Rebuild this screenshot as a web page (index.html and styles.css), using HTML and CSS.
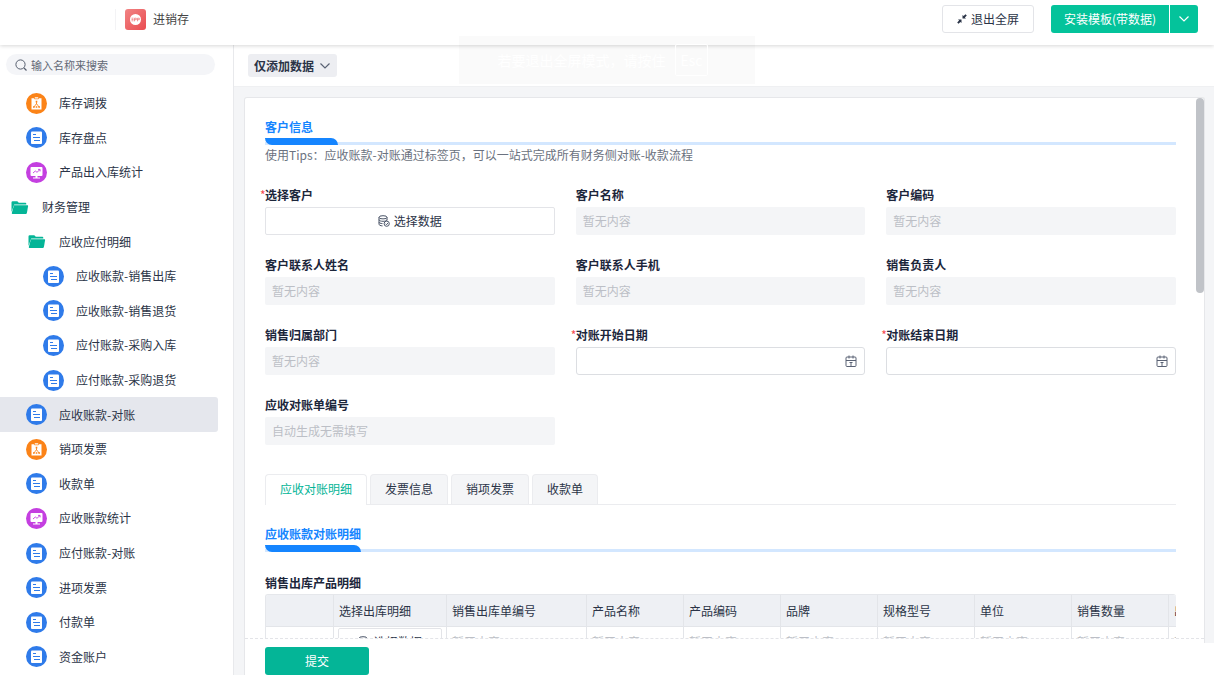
FILE: index.html
```
<!DOCTYPE html>
<html lang="zh-CN">
	<head>
		<meta charset="UTF-8">
		<title>进销存</title>
		<link rel="stylesheet" href="styles.css">
	</head>
	<body>

		<!--公用图标-->
		<svg class="sprite" aria-hidden="true">
			<symbol id="i-form" viewBox="0 0 21 21">
				<circle cx="10.5" cy="10.5" r="10.5" fill="#2f7bea"/>
				<rect x="5" y="4.500" width="11" height="12.500" rx="1" fill="#fff"/>
				<path d="M7 7.500h3M7 10.500h7M8 13.500h6" stroke="#2f7bea"/>
			</symbol>
			<symbol id="i-flow" viewBox="0 0 21 21">
				<circle cx="10.5" cy="10.5" r="10.5" fill="#fb8318"/>
				<path d="M5.500 5.200h2.500l.6 1h3.800l.6-1h2.500v11.300h-10z" fill="#fff"/>
				<path d="M8.800 4.300h3.400v1.200h-3.400z" fill="#fff"/>
				<path d="M10.500 8.300v3M8 14l2.500-3.500L13 14" stroke="#fb8318" stroke-width=".8" fill="none"/>
				<path d="M9.700 7.800h1.600v1.700H9.700zM7 13.200h1.700v1.600H7zM9.700 13.200h1.600v1.600H9.700zM12.300 13.200H14v1.600h-1.700z" fill="#fb8318"/>
			</symbol>
			<symbol id="i-board" viewBox="0 0 21 21">
				<circle cx="10.5" cy="10.5" r="10.5" fill="#c43fe0"/>
				<rect x="4.500" y="5" width="12" height="9" rx="1" fill="#fff"/>
				<path d="M9.500 14h2v1.500H14v1H7v-1h2.500z" fill="#fff"/>
				<path d="M7 11l2.300-2 1.700 1.300L14 7.500M12 7.400h2.100v2" stroke="#c43fe0" stroke-width=".9" fill="none"/>
			</symbol>
			<symbol id="i-folder" viewBox="0 0 21 21">
				<path d="M2.500 15V5.500q0-1.200 1.200-1.200h4.600l1.500 1.500h6.500q1 0 1 1v.700H5.200z" fill="#04b597"/>
				<path d="M5 8.300h13.600q.6 0 .5.700l-1.200 6.900q-.2 1-1.100 1H3.600q-1 0-.8-1z" fill="#04b597"/>
			</symbol>
			<symbol id="i-data" viewBox="0 0 12 12">
				<g fill="none" stroke="#4b5568">
					<ellipse cx="5" cy="2.300" rx="4" ry="1.600"/>
					<path d="M1 2.300v6.900c0 .9 1.500 1.600 3.500 1.700M9 2.300v3M1 4.700c0 1 2 1.600 4 1.600s4-.6 4-1.500M1 7c0 .9 1.500 1.500 3.500 1.600"/>
					<circle cx="8.700" cy="8.700" r="2.600"/>
					<path d="M7.500 8.700l1 1 1.500-1.700"/>
				</g>
			</symbol>
			<symbol id="i-date" viewBox="0 0 12 12">
				<path d="M2 2h8q1 0 1 1v7.500q0 1-1 1H2q-1 0-1-1V3q0-1 1-1zM1 5.500h10M4 .500v3M8 .500v3M4.500 7.500H6v4M6 7.500h1.500" fill="none" stroke="#5a6274"/>
			</symbol>
			<symbol id="i-down" viewBox="0 0 12 12">
				<path d="M1.500 3.500L6 8l4.500-4.500" fill="none" stroke="currentColor" stroke-width="1.200"/>
			</symbol>
		</svg>

		<header class="header">
			<div class="brand">
				<svg class="logo" viewBox="0 0 21 21" aria-hidden="true">
					<defs>
						<linearGradient id="logoBg" x1="0" y1="0" x2="1" y2="1">
							<stop offset="0" stop-color="#f18484"/>
							<stop offset="1" stop-color="#ea4b50"/>
						</linearGradient>
					</defs>
					<rect width="21" height="21" rx="3" fill="url(#logoBg)"/>
					<circle cx="10.5" cy="10.5" r="5.500" fill="#fff"/>
					<path d="M6.500 9.200h2M6.500 10.500h2M6.500 11.800h2M9.500 12.300V9.200h1.800v1.500H9.600M12.500 12.300V9.200h1.800v1.500h-1.700" stroke="#ee6a6d" stroke-width=".7" fill="none"/>
				</svg>
				<span>进销存</span>
			</div>
			<button class="btn exit-btn" type="button">
				<svg class="icon-sm" viewBox="0 0 10 10" aria-hidden="true">
					<path d="M5.500 1v3.500H9L7.900 3.400 9.800 1.500 8.500.200 6.600 2.100zM4.500 9V5.500H1l1.100 1.100L.200 8.500l1.300 1.300 1.900-1.900z" fill="#2b3447"/>
				</svg>
				退出全屏
			</button>
			<div class="install">
				<button class="install-btn" type="button">安装模板(带数据)</button>
				<button class="install-more" type="button" aria-label="更多"><svg class="icon" aria-hidden="true"><use href="#i-down"/></svg></button>
			</div>
		</header>

		<div class="page">

			<!--左侧菜单-->
			<aside class="sidebar">
				<label class="search">
					<svg class="icon" viewBox="0 0 12 12" aria-hidden="true">
						<circle cx="5.500" cy="5.500" r="4.600" fill="none" stroke="#565e6e"/>
						<path d="M9 9l2.500 2.500" stroke="#565e6e" stroke-width="1.200"/>
					</svg>
					<input type="text" placeholder="输入名称来搜索" aria-label="输入名称来搜索">
				</label>
				<nav class="menu">
					<a class="level1" href="#"><svg><use href="#i-flow"/></svg>库存调拨</a>
					<a class="level1" href="#"><svg><use href="#i-form"/></svg>库存盘点</a>
					<a class="level1" href="#"><svg><use href="#i-board"/></svg>产品出入库统计</a>
					<a href="#"><svg><use href="#i-folder"/></svg>财务管理</a>
					<a class="level1" href="#"><svg><use href="#i-folder"/></svg>应收应付明细</a>
					<a class="level2" href="#"><svg><use href="#i-form"/></svg>应收账款-销售出库</a>
					<a class="level2" href="#"><svg><use href="#i-form"/></svg>应收账款-销售退货</a>
					<a class="level2" href="#"><svg><use href="#i-form"/></svg>应付账款-采购入库</a>
					<a class="level2" href="#"><svg><use href="#i-form"/></svg>应付账款-采购退货</a>
					<a class="level1 active" href="#"><svg><use href="#i-form"/></svg>应收账款-对账</a>
					<a class="level1" href="#"><svg><use href="#i-flow"/></svg>销项发票</a>
					<a class="level1" href="#"><svg><use href="#i-form"/></svg>收款单</a>
					<a class="level1" href="#"><svg><use href="#i-board"/></svg>应收账款统计</a>
					<a class="level1" href="#"><svg><use href="#i-form"/></svg>应付账款-对账</a>
					<a class="level1" href="#"><svg><use href="#i-form"/></svg>进项发票</a>
					<a class="level1" href="#"><svg><use href="#i-form"/></svg>付款单</a>
					<a class="level1" href="#"><svg><use href="#i-form"/></svg>资金账户</a>
				</nav>
			</aside>

			<main class="main">
				<div class="toolbar">
					<button class="mode-btn" type="button">仅添加数据<svg class="icon" aria-hidden="true"><use href="#i-down"/></svg></button>
				</div>

				<div class="card">
					<form class="form" id="billForm">
						<h2 class="section-title"><span>客户信息</span></h2>
						<p class="tips">使用Tips：应收账款-对账通过标签页，可以一站式完成所有财务侧对账-收款流程</p>

						<div class="fields">
							<div class="field required">
								<label for="pick">选择客户</label>
								<button class="btn pick" id="pick" type="button"><svg class="icon" aria-hidden="true"><use href="#i-data"/></svg>选择数据</button>
							</div>
							<div class="field">
								<label for="name">客户名称</label>
								<input id="name" type="text" placeholder="暂无内容" disabled>
							</div>
							<div class="field">
								<label for="code">客户编码</label>
								<input id="code" type="text" placeholder="暂无内容" disabled>
							</div>
							<div class="field">
								<label for="contact">客户联系人姓名</label>
								<input id="contact" type="text" placeholder="暂无内容" disabled>
							</div>
							<div class="field">
								<label for="phone">客户联系人手机</label>
								<input id="phone" type="text" placeholder="暂无内容" disabled>
							</div>
							<div class="field">
								<label for="owner">销售负责人</label>
								<input id="owner" type="text" placeholder="暂无内容" disabled>
							</div>
							<div class="field">
								<label for="dept">销售归属部门</label>
								<input id="dept" type="text" placeholder="暂无内容" disabled>
							</div>
							<div class="field required">
								<label for="start">对账开始日期</label>
								<div class="date"><input id="start" type="text"><svg class="icon" aria-hidden="true"><use href="#i-date"/></svg></div>
							</div>
							<div class="field required">
								<label for="end">对账结束日期</label>
								<div class="date"><input id="end" type="text"><svg class="icon" aria-hidden="true"><use href="#i-date"/></svg></div>
							</div>
							<div class="field">
								<label for="billNo">应收对账单编号</label>
								<input id="billNo" type="text" placeholder="自动生成无需填写" disabled>
							</div>
						</div>

						<div class="tabs" role="tablist">
							<button class="tab current" type="button" role="tab" aria-selected="true">应收对账明细</button>
							<button class="tab" type="button" role="tab" aria-selected="false">发票信息</button>
							<button class="tab" type="button" role="tab" aria-selected="false">销项发票</button>
							<button class="tab" type="button" role="tab" aria-selected="false">收款单</button>
						</div>

						<h2 class="section-title"><span>应收账款对账明细</span></h2>

						<h3 class="table-title">销售出库产品明细</h3>
						<div class="table-wrap">
							<table>
								<colgroup>
									<col class="col-no"><col class="col-pick"><col class="col-order">
									<col><col><col><col><col><col><col>
								</colgroup>
								<thead>
									<tr>
										<th></th>
										<th>选择出库明细</th>
										<th>销售出库单编号</th>
										<th>产品名称</th>
										<th>产品编码</th>
										<th>品牌</th>
										<th>规格型号</th>
										<th>单位</th>
										<th>销售数量</th>
										<th>出库日期</th>
									</tr>
								</thead>
								<tbody>
									<tr>
										<td></td>
										<td class="cell-pick"><button class="btn pick" type="button"><svg class="icon" aria-hidden="true"><use href="#i-data"/></svg>选择数据</button></td>
										<td>暂无内容</td>
										<td>暂无内容</td>
										<td>暂无内容</td>
										<td>暂无内容</td>
										<td>暂无内容</td>
										<td>暂无内容</td>
										<td>暂无内容</td>
										<td>暂无内容</td>
									</tr>
								</tbody>
							</table>
						</div>
					</form>
					<div class="scroll-thumb"></div>
					<div class="footer">
						<button class="submit" type="submit" form="billForm">提交</button>
					</div>
				</div>
			</main>

		</div>

		<!--全屏提示，正在淡出-->
		<div class="fullscreen-tip">若要退出全屏模式，请按住<kbd>Esc</kbd></div>

		<div class="corner"></div>

	</body>
</html>
```

FILE: styles.css
```
*{
	margin: 0;
	padding: 0;
	box-sizing: border-box;
}


body{
	display: flex;
	flex-direction: column;
	height: 100vh;
	overflow: hidden;
	font: 12px/20px "Noto Sans CJK SC", sans-serif;
	color: #2b3447;
	background-color: #fff;
}


button,
input{
	font: inherit;
	color: inherit;
}


button{
	cursor: pointer;
}


a{
	color: inherit;
	text-decoration: none;
}


.sprite{
	position: absolute;
	width: 0;
	height: 0;
}


.icon{
	flex: none;
	width: 12px;
	height: 12px;
}


.icon-sm{
	flex: none;
	width: 10px;
	height: 10px;
}


.btn{
	display: flex;
	align-items: center;
	justify-content: center;
	gap: 4px;
	height: 28px;
	border: 1px solid #e3e4e8;
	border-radius: 3px;
	background-color: #fff;
}


/*顶部*/
.header{
	position: relative;
	z-index: 1;
	flex: none;
	display: flex;
	align-items: center;
	height: 45px;
	padding: 0 16px 7px 115px;
	background-color: #fff;
	box-shadow: 0 1px 4px rgba(0,0,0,.16);
}


.brand{
	display: flex;
	align-items: center;
	gap: 7px;
	margin-right: auto;
	padding-left: 9px;
	border-left: 1px solid #f3f3f5;
	color: #444;
}


.logo{
	width: 21px;
	height: 21px;
}


.exit-btn{
	width: 92px;
	margin-right: 17px;
}


.install{
	display: flex;
	gap: 1px;
}


.install button{
	display: flex;
	align-items: center;
	justify-content: center;
	height: 28px;
	border: 0;
	background-color: #04c39b;
	color: #fff;
}


.install .install-btn{
	width: 118px;
	border-radius: 3px 0 0 3px;
}


.install .install-more{
	width: 28px;
	border-radius: 0 3px 3px 0;
}


.page{
	flex: 1;
	display: flex;
	min-height: 0;
}


/*左侧菜单*/
.sidebar{
	flex: none;
	display: flex;
	flex-direction: column;
	width: 234px;
	padding-top: 9px;
	border-right: 1px solid #e8e9ec;
}


.search{
	display: flex;
	align-items: center;
	gap: 4px;
	height: 21px;
	margin: 0 18px 11px 6px;
	padding: 0 9px;
	border-radius: 11px;
	background-color: #f4f5f8;
}


.search input{
	flex: 1;
	min-width: 0;
	border: 0;
	outline: 0;
	background: none;
	font-size: 11px;
}


.search input::placeholder{
	color: #626876;
}


.menu{
	flex: 1;
	display: flex;
	flex-direction: column;
	padding-bottom: 1px;
}


.menu a{
	flex: 1;
	display: flex;
	align-items: center;
	gap: 12px;
	margin-right: 15px;
	padding-left: 9px;
	border-radius: 0 3px 3px 0;
}


.menu svg{
	width: 21px;
	height: 21px;
}


.menu .level1{
	padding-left: 26px;
}


.menu .level2{
	padding-left: 43px;
}


.menu .active{
	background-color: #e5e7ed;
}


/*右侧内容*/
.main{
	flex: 1;
	display: flex;
	flex-direction: column;
	min-width: 0;
	background-color: #f4f5f7;
}


.toolbar{
	flex: none;
	padding: 9px 14px;
	background-color: #fff;
	border-bottom: 1px solid #eff0f2;
}


.mode-btn{
	display: flex;
	align-items: center;
	gap: 5px;
	height: 23px;
	padding: 0 6px;
	border: 0;
	border-radius: 3px;
	background-color: #edeef2;
	font-weight: bold;
}


.mode-btn .icon{
	color: #5a6274;
}


.card{
	position: relative;
	flex: 1;
	display: flex;
	flex-direction: column;
	min-height: 0;
	margin: 10px 9px 0 10px;
	border: 1px solid #e6e7ea;
	border-bottom: 0;
	border-radius: 3px 3px 0 0;
	background-color: #fff;
}


.form{
	flex: 1;
	min-height: 0;
	overflow: hidden;
	padding: 19px 28px 0 20px;
}


.scroll-thumb{
	position: absolute;
	top: 0;
	right: 0;
	width: 8px;
	height: 195px;
	border-radius: 4px;
	background-color: #c0c3c8;
}


.section-title{
	border-bottom: 3px solid #d3e7ff;
	color: #1585ff;
	font-size: 12px;
}


/*蓝色短条压住下面的浅色线*/
.section-title span{
	position: relative;
	display: inline-block;
	height: 28px;
	margin-bottom: -3px;
	vertical-align: top;
}


.section-title span::after{
	content: "";
	position: absolute;
	left: 0;
	bottom: 0;
	width: 100%;
	min-width: 73px;
	height: 7px;
	border-radius: 0 7px 0 7px;
	background-color: #1585ff;
}


.tips{
	color: #6b7280;
}


.fields{
	display: grid;
	grid-template-columns: repeat(3, 1fr);
	gap: 18px 21px;
	margin-top: 18px;
}


.field label{
	position: relative;
	display: block;
	line-height: 24px;
	font-weight: bold;
	color: #1c263b;
}


.required label::before{
	content: "*";
	position: absolute;
	left: -5px;
	font-weight: normal;
	color: #f5494e;
}


.field > input,
.pick,
.date{
	display: flex;
	width: 100%;
	height: 28px;
	border-radius: 2px;
}


.field > input{
	padding: 0 7px 2px;
	border: 0;
	background-color: #f4f5f7;
}


.field > input::placeholder{
	color: #bcbfc6;
}


.date{
	align-items: center;
	padding: 0 7px;
	border: 1px solid #dcdee2;
	border-radius: 3px;
}


.date input{
	flex: 1;
	min-width: 0;
	border: 0;
	outline: 0;
}


/*标签页*/
.tabs{
	display: flex;
	gap: 3px;
	margin: 29px 0 19px;
	border-bottom: 1px solid #ebecef;
}


.tab{
	height: 30px;
	padding: 0 14px 2px;
	border: 1px solid #ebecef;
	border-bottom: 0;
	border-radius: 4px 4px 0 0;
	background-color: #f4f5f7;
}


.tabs .current{
	margin-bottom: -1px;
	height: 31px;
	background-color: #fff;
	color: #04b597;
}


/*明细表格*/
.table-title{
	margin-top: 20px;
	font-size: 12px;
	line-height: 22px;
	color: #1c263b;
}


.table-wrap{
	overflow: hidden;
	border-top: 1px solid #e5e7eb;
	border-left: 1px solid #e5e7eb;
	border-radius: 3px 3px 0 0;
}


table{
	width: 1000px;
	table-layout: fixed;
	border-collapse: separate;
	border-spacing: 0;
}


col{
	width: 97px;
}


.col-no{
	width: 68px;
}


.col-pick{
	width: 113px;
}


.col-order{
	width: 140px;
}


th,
td{
	padding: 0 5px;
	border-right: 1px solid #e3e5e9;
	border-bottom: 1px solid #e3e5e9;
	text-align: left;
	font-weight: normal;
	white-space: nowrap;
}


th{
	height: 32px;
	background-color: #eef0f4;
}


td{
	height: 30px;
	color: #bcbfc6;
}


td.cell-pick{
	padding: 0 4px;
	color: #2b3447;
}


.footer{
	flex: none;
	padding: 8px 20px 0;
	border-top: 1px dashed #e3e4e8;
	background-color: #fff;
}


.submit{
	width: 104px;
	height: 28px;
	border: 0;
	border-radius: 3px;
	background-color: #04b597;
	color: #fff;
}


.fullscreen-tip{
	position: absolute;
	z-index: 2;
	top: 36px;
	left: 50%;
	transform: translateX(-50%);
	display: flex;
	align-items: center;
	justify-content: center;
	gap: 9px;
	width: 296px;
	height: 48px;
	padding-right: 8px;
	background-color: rgba(0,0,0,.02);
	color: #fff;
	font-size: 14px;
	white-space: nowrap;
}


.fullscreen-tip kbd{
	padding: 5px;
	border: 1px solid #fff;
	border-radius: 2px;
	font-family: inherit;
}


.corner{
	position: absolute;
	right: 0;
	bottom: 0;
	width: 107px;
	height: 32px;
	background-color: #fff;
}
```
